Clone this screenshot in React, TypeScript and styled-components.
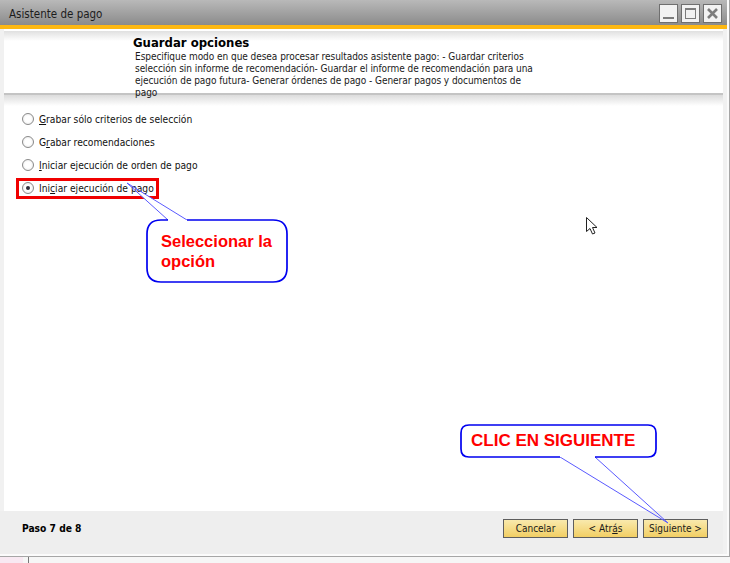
import React from "react";
import styled, { createGlobalStyle } from "styled-components";

const Global = createGlobalStyle`
  html, body { margin: 0; padding: 0; background: #f6f6f6; }
  #root { width: 730px; height: 563px; overflow: hidden; }
`;

const uiFont = `"DejaVu Sans Condensed", "DejaVu Sans", sans-serif`;

const Page = styled.div`
  position: relative;
  width: 730px;
  height: 563px;
  overflow: hidden;
  background: #f6f6f6;
  font-family: ${uiFont};
  color: #111;
`;

const Frame = styled.div`
  width: 730px;
  height: 557px;
  box-sizing: border-box;
  border-right: 1px solid #a6a6a6;
  border-bottom: 1px solid #a6a6a6;
  background: #fbfbfb;
  padding: 0 2px 2px 0;
`;

const TitleBar = styled.div`
  height: 25px;
  box-sizing: border-box;
  display: flex;
  align-items: center;
  justify-content: space-between;
  padding: 3px 5px 0 9px;
  background: linear-gradient(#b9b9b9, #8b8b8b);
`;

const Title = styled.span`
  font-size: 11.5px;
  color: #1c1c1c;
`;

const WindowButtons = styled.div`
  display: flex;
  gap: 3px;
  margin-top: -2px;
`;

const WindowButton = styled.div`
  width: 19px;
  height: 19px;
  box-sizing: border-box;
  border: 1px solid #6f6f6f;
  background: #f2f2f2;
  display: flex;
  align-items: center;
  justify-content: center;
`;

const Accent = styled.div`
  height: 4px;
  background: #fdb813;
`;

const Body = styled.div`
  height: 525px;
  box-sizing: border-box;
  background: #f1f1f1;
  padding: 0 4px;
  display: flex;
  flex-direction: column;
`;

const Header = styled.div`
  position: relative;
  z-index: 1;
  height: 66px;
  flex: none;
  box-sizing: border-box;
  border-top: 2px solid #fff;
  border-bottom: 2px solid #c4c4c4;
  background: linear-gradient(#e0e0e0 0, #fff 10px);
  padding: 4px 0 0 129px;
`;

const HeaderTitle = styled.div`
  font-size: 13px;
  font-weight: 700;
  line-height: 15px;
  color: #000;
`;

const Description = styled.div`
  font-size: 10px;
  letter-spacing: -0.05px;
  line-height: 12px;
  padding-left: 2px;
  margin-top: 1px;
  color: #1a1a1a;
`;

const DescLine = styled.div`
  white-space: nowrap;
`;

const Main = styled.div`
  flex: 1;
  background: linear-gradient(#dcdcdc 0, #fff 11px);
  padding: 17px 0 0 18px;
  display: flex;
  flex-direction: column;
  gap: 9px;
`;

const Option = styled.label`
  display: flex;
  align-items: center;
  gap: 5px;
  height: 14px;
  font-size: 10.2px;
`;

const Radio = styled.span<{ $on?: boolean }>`
  width: 12px;
  height: 12px;
  box-sizing: border-box;
  border-radius: 50%;
  border: 1px solid #8a8a8a;
  background: radial-gradient(circle, #fff 40%, #e4e4e4 100%);
  display: flex;
  align-items: center;
  justify-content: center;
  &::after {
    content: "";
    display: ${(p) => (p.$on ? "block" : "none")};
    width: 4px;
    height: 4px;
    border-radius: 50%;
    background: #2e2e3a;
  }
`;

const Footer = styled.div`
  height: 43px;
  flex: none;
  background: #eeeeee;
  margin: 0 0 0 -4px;
  display: flex;
  align-items: center;
  justify-content: space-between;
  padding: 0 15px 8px 22px;
  box-sizing: border-box;
`;

const StepLabel = styled.span`
  font-size: 10.2px;
  font-weight: 700;
  color: #000;
`;

const Buttons = styled.div`
  display: flex;
  gap: 5px;
`;

const WizardButton = styled.div`
  width: 65px;
  height: 19px;
  box-sizing: border-box;
  border: 1px solid #5e5e5e;
  background: linear-gradient(#f9e9ad, #f2cf64);
  display: flex;
  align-items: center;
  justify-content: center;
  font-size: 10px;
  color: #1a1a1a;
`;

const BelowStrip = styled.div`
  display: flex;
  height: 6px;
`;

const Blush = styled.div`
  width: 23px;
  background: #f8e9f2;
`;

const Divider = styled.div`
  width: 1px;
  margin-left: 5px;
  background: #777;
`;

const Overlay = styled.svg`
  position: absolute;
  z-index: 2;
  left: 0;
  top: 0;
  pointer-events: none;
`;

const CalloutText = styled.div<{ $x: number; $y: number; $w: number; $size: number }>`
  position: absolute;
  z-index: 3;
  left: ${(p) => p.$x}px;
  top: ${(p) => p.$y}px;
  width: ${(p) => p.$w}px;
  font-family: "Liberation Sans", Arial, sans-serif;
  font-weight: 700;
  font-size: ${(p) => p.$size}px;
  line-height: 20px;
  color: #ff0000;
`;

const Mark = styled.div`
  position: absolute;
  z-index: 2;
  left: 16px;
  top: 178px;
  width: 143px;
  height: 21px;
  box-sizing: border-box;
  border: 3px solid #f00000;
`;

const Cursor = styled.svg`
  position: absolute;
  z-index: 3;
  left: 585px;
  top: 216px;
`;

export default function App() {
  return (
    <Page>
      <Global />
      <Frame>
        <TitleBar>
          <Title>Asistente de pago</Title>
          <WindowButtons>
            <WindowButton>
              <svg width="13" height="13" viewBox="0 0 13 13">
                <rect x="1" y="10" width="11" height="2" fill="#7c7c7c" />
              </svg>
            </WindowButton>
            <WindowButton>
              <svg width="13" height="13" viewBox="0 0 13 13">
                <rect x="1.5" y="1.5" width="10" height="10" fill="none" stroke="#7c7c7c" />
                <rect x="1" y="1" width="11" height="2" fill="#7c7c7c" />
              </svg>
            </WindowButton>
            <WindowButton>
              <svg width="13" height="13" viewBox="0 0 13 13">
                <path d="M2 2 L11 11 M11 2 L2 11" stroke="#7c7c7c" strokeWidth="2.6" />
              </svg>
            </WindowButton>
          </WindowButtons>
        </TitleBar>
        <Accent />
        <Body>
          <Header>
            <HeaderTitle>Guardar opciones</HeaderTitle>
            <Description>
              <DescLine>Especifique modo en que desea procesar resultados asistente pago: - Guardar criterios</DescLine>
              <DescLine>selección sin informe de recomendación- Guardar el informe de recomendación para una</DescLine>
              <DescLine>ejecución de pago futura- Generar órdenes de pago - Generar pagos y documentos de</DescLine>
              <DescLine>pago</DescLine>
            </Description>
          </Header>
          <Main>
            <Option><Radio /><span><u>G</u>rabar sólo criterios de selección</span></Option>
            <Option><Radio /><span>G<u>r</u>abar recomendaciones</span></Option>
            <Option><Radio /><span><u>I</u>niciar ejecución de orden de pago</span></Option>
            <Option><Radio $on /><span>Ini<u>c</u>iar ejecución de pago</span></Option>
          </Main>
          <Footer>
            <StepLabel>Paso 7 de 8</StepLabel>
            <Buttons>
              <WizardButton>Cancelar</WizardButton>
              <WizardButton>&lt; Atr<u>á</u>s</WizardButton>
              <WizardButton>Siguiente &gt;</WizardButton>
            </Buttons>
          </Footer>
        </Body>
      </Frame>
      <BelowStrip>
        <Blush />
        <Divider />
      </BelowStrip>

      <Mark />
      <Overlay width="730" height="563" viewBox="0 0 730 563">
        <polygon points="138,193 168,220 187,220 143,193" fill="#fff" />
        <path d="M168 220 L127 183 L187 220" fill="none" stroke="#5a5aff" strokeWidth="1" />
        <path
          d="M187 220 H273 Q287 220 287 234 V268 Q287 282 273 282 H161 Q147 282 147 268 V234 Q147 220 161 220 H168"
          fill="#fff"
          stroke="#0000f0"
          strokeWidth="1.7"
        />
        <polygon points="560,457 595,457 640,499 625,499" fill="#fff" />
        <path d="M560 457 L668 523 L595 457" fill="none" stroke="#5a5aff" strokeWidth="1" />
        <path
          d="M595 457 H648 Q656 457 656 449 V433 Q656 425 648 425 H469 Q461 425 461 433 V449 Q461 457 469 457 H560"
          fill="#fff"
          stroke="#0000f0"
          strokeWidth="1.7"
        />
      </Overlay>
      <CalloutText $x={161} $y={231} $w={125} $size={16.5}>Seleccionar la opción</CalloutText>
      <CalloutText $x={471} $y={431} $w={180} $size={17}>CLIC EN SIGUIENTE</CalloutText>
      <Cursor width="14" height="20" viewBox="0 0 14 20">
        <path d="M1.5 1.5 V15.5 L5 12.5 L7.5 18 L10 17 L7.5 11.5 L12 11.5 Z" fill="#fff" stroke="#222" strokeWidth="1" />
      </Cursor>
    </Page>
  );
}
